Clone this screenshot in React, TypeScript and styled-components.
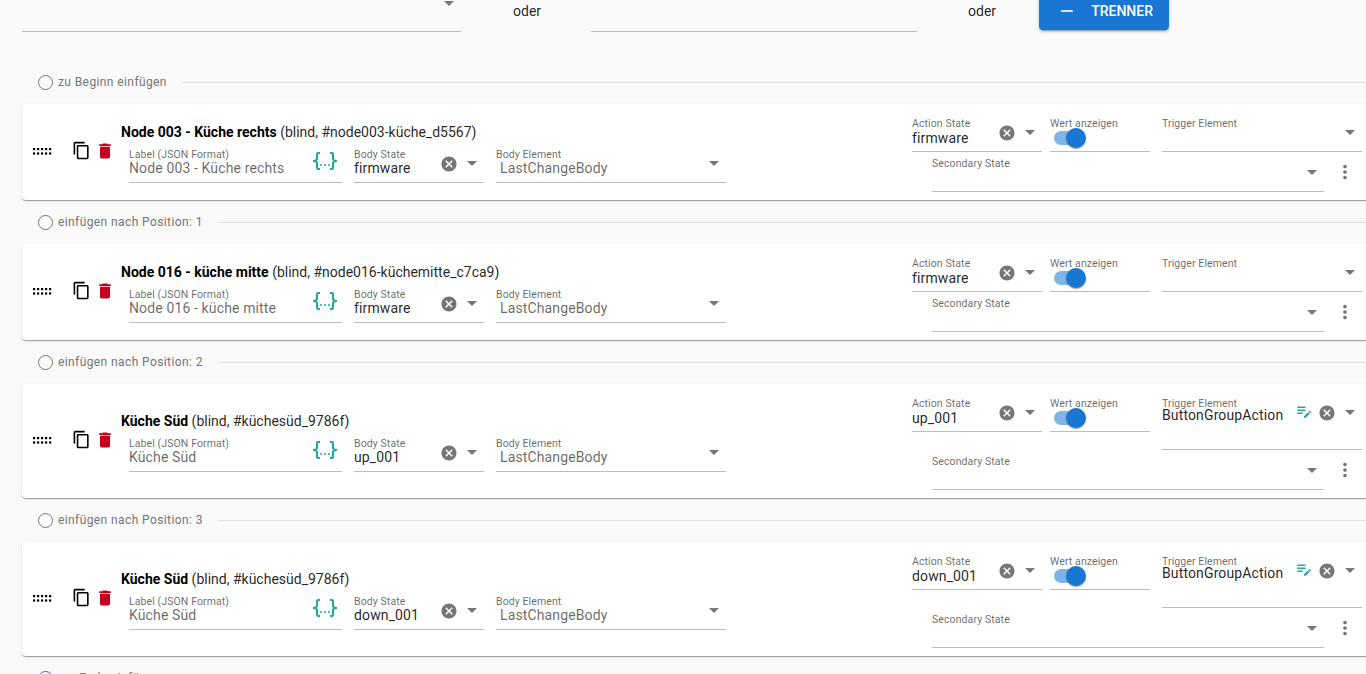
import React, { FC } from 'react';
import styled, { createGlobalStyle } from 'styled-components';

const PATHS = {
  arrow: 'M7 10l5 5 5-5z',
  cancel: 'M12 2C6.47 2 2 6.47 2 12s4.47 10 10 10 10-4.47 10-10S17.53 2 12 2zm5 13.59L15.59 17 12 13.41 8.41 17 7 15.59 10.59 12 7 8.41 8.41 7 12 10.59 15.59 7 17 8.41 13.41 12 17 15.59z',
  copy: 'M16 1H4c-1.1 0-2 .9-2 2v14h2V3h12V1zm3 4H8c-1.1 0-2 .9-2 2v14c0 1.1.9 2 2 2h11c1.1 0 2-.9 2-2V7c0-1.1-.9-2-2-2zm0 16H8V7h11v14z',
  trash: 'M6 19c0 1.1.9 2 2 2h8c1.1 0 2-.9 2-2V7H6v12zM19 4h-3.5l-1-1h-5l-1 1H5v2h14V4z',
  more: 'M12 8c1.1 0 2-.9 2-2s-.9-2-2-2-2 .9-2 2 .9 2 2 2zm0 2c-1.1 0-2 .9-2 2s.9 2 2 2 2-.9 2-2-.9-2-2-2zm0 6c-1.1 0-2 .9-2 2s.9 2 2 2 2-.9 2-2-.9-2-2-2z',
  minus: 'M19 13H5v-2h14v2z',
  json: 'M5,3H7V5H5V10A2,2 0 0,1 3,12A2,2 0 0,1 5,14V19H7V21H5C3.93,20.73 3,20.1 3,19V15A2,2 0 0,0 1,13H0V11H1A2,2 0 0,0 3,9V5A2,2 0 0,1 5,3M19,3A2,2 0 0,1 21,5V9A2,2 0 0,0 23,11H24V13H23A2,2 0 0,0 21,15V19A2,2 0 0,1 19,21H17V19H19V14A2,2 0 0,1 21,12A2,2 0 0,1 19,10V5H17V3H19M12,15A1,1 0 0,1 13,16A1,1 0 0,1 12,17A1,1 0 0,1 11,16A1,1 0 0,1 12,15M8,15A1,1 0 0,1 9,16A1,1 0 0,1 8,17A1,1 0 0,1 7,16A1,1 0 0,1 8,15M16,15A1,1 0 0,1 17,16A1,1 0 0,1 16,17A1,1 0 0,1 15,16A1,1 0 0,1 16,15Z',
  editNote: 'M3 10h11v2H3v-2zm0-2h11V6H3v2zm0 8h7v-2H3v2zm15.01-3.13.71-.71c.39-.39 1.02-.39 1.41 0l.71.71c.39.39.39 1.02 0 1.41l-.71.71-2.12-2.12zm-.71.71-5.3 5.3V21h2.12l5.3-5.3-2.12-2.12z',
};

const GlobalStyle = createGlobalStyle`
  html, body {
    margin: 0;
    height: 674px;
    overflow: hidden;
    background: #fafafa;
    font-family: Roboto, "Liberation Sans", sans-serif;
  }
`;

const Icon: FC<{ d: string; size?: number; color?: string }> = ({ d, size = 24, color = '#757575' }) => (
  <svg width={size} height={size} viewBox="0 0 24 24" fill={color} style={{ flexShrink: 0, display: 'block' }}>
    <path d={d} />
  </svg>
);

const Page = styled.div`
  width: 1386px;
  padding-left: 22px;
  box-sizing: border-box;
`;

const Toolbar = styled.div`
  display: flex;
  align-items: flex-end;
  height: 32px;
  margin-bottom: 28px;
`;

const ToolbarField = styled.div<{ $width: number }>`
  display: flex;
  justify-content: flex-end;
  align-items: flex-start;
  width: ${(p) => p.$width}px;
  height: 32px;
  box-sizing: border-box;
  border-bottom: 1px solid #bdbdbd;
`;

const ToolbarArrow = styled.div`
  margin-top: -9px;
`;

const OrText = styled.span<{ $left: number; $right: number }>`
  align-self: flex-start;
  margin: 3px ${(p) => p.$right}px 0 ${(p) => p.$left}px;
  font-size: 14px;
  line-height: 16px;
  color: rgba(0, 0, 0, 0.87);
`;

const SeparatorButton = styled.button`
  display: flex;
  align-items: center;
  align-self: flex-start;
  width: 130px;
  height: 38px;
  margin-top: -8px;
  padding: 0 0 0 18px;
  border: 0;
  border-radius: 4px;
  background: #1976d2;
  color: #fff;
  font-family: inherit;
  font-size: 14px;
  font-weight: 500;
  text-transform: uppercase;
  box-shadow: 0 3px 1px -2px rgba(0, 0, 0, 0.2), 0 2px 2px 0 rgba(0, 0, 0, 0.14), 0 1px 5px 0 rgba(0, 0, 0, 0.12);
  span {
    margin-left: 14px;
  }
`;

const InsertRow = styled.div`
  display: flex;
  align-items: center;
  height: 44px;
  padding-left: 16px;
`;

const Radio = styled.span<{ $checked?: boolean }>`
  display: flex;
  align-items: center;
  justify-content: center;
  width: 15px;
  height: 15px;
  margin-top: 1px;
  box-sizing: border-box;
  border: 1.5px solid ${(p) => (p.$checked ? '#1976d2' : '#757575')};
  border-radius: 50%;
  &::after {
    content: '';
    display: ${(p) => (p.$checked ? 'block' : 'none')};
    width: 7px;
    height: 7px;
    border-radius: 50%;
    background: #1976d2;
  }
`;

const InsertLabel = styled.span`
  margin-left: 5px;
  font-size: 12px;
  letter-spacing: 0.4px;
  color: #757575;
  white-space: nowrap;
`;

const InsertLine = styled.span`
  flex: 1;
  margin-left: 16px;
  border-top: 1px solid #e0e0e0;
`;

const Card = styled.div<{ $tall?: boolean }>`
  display: flex;
  align-items: center;
  height: ${(p) => (p.$tall ? 114 : 96)}px;
  padding: 0 24px 0 11px;
  box-sizing: border-box;
  border-radius: 4px;
  background: #fff;
  box-shadow: 0 2px 1px -1px rgba(0, 0, 0, 0.2), 0 1px 1px 0 rgba(0, 0, 0, 0.14), 0 1px 3px 0 rgba(0, 0, 0, 0.12);
`;

const DragHandle = styled.svg`
  flex-shrink: 0;
  width: 20px;
  height: 7px;
  margin-top: -2px;
`;

const CopyButton = styled.div`
  margin-left: 18.5px;
  margin-top: -3px;
`;

const DeleteButton = styled.div`
  margin-left: 4.5px;
  margin-top: -2px;
`;

const Main = styled.div`
  margin: 1px 0 0 6px;
`;

const Title = styled.div`
  height: 20px;
  font-size: 14px;
  line-height: 20px;
  color: rgba(0, 0, 0, 0.87);
  white-space: nowrap;
  b {
    font-weight: 700;
    color: #000;
  }
`;

const FieldRow = styled.div`
  display: flex;
  gap: 12px;
  margin-left: 8px;
`;

const Field = styled.div<{ $width?: number; $height?: number; $gap?: number; $grow?: boolean }>`
  position: relative;
  width: ${(p) => (p.$grow ? 'auto' : `${p.$width}px`)};
  flex: ${(p) => (p.$grow ? 1 : '0 0 auto')};
  height: ${(p) => p.$height ?? 40}px;
  margin-left: ${(p) => p.$gap ?? 0}px;
  padding-top: 6px;
  box-sizing: border-box;
  border-bottom: 1px solid #bdbdbd;
`;

const BodyField = styled(Field)`
  height: 41px;
  padding-top: 7px;
`;

const FieldLabel = styled.div`
  font-size: 10.5px;
  line-height: 12px;
  letter-spacing: 0.1px;
  color: rgba(0, 0, 0, 0.6);
  white-space: nowrap;
`;

const FieldValue = styled.div<{ $muted?: boolean; $indent?: number; $lift?: number }>`
  margin-top: ${(p) => -(p.$lift ?? 0)}px;
  padding-left: ${(p) => p.$indent ?? 0}px;
  font-size: 14px;
  line-height: 16px;
  letter-spacing: 0.13px;
  color: ${(p) => (p.$muted ? 'rgba(0, 0, 0, 0.6)' : 'rgba(0, 0, 0, 0.87)')};
  white-space: nowrap;
`;

const Adornments = styled.div<{ $top?: number }>`
  position: absolute;
  top: ${(p) => p.$top ?? 8}px;
  right: 0;
  display: flex;
  align-items: center;
`;

const ClearIcon = styled.div`
  margin: 2px 2px 0 0;
`;

const EditIcon = styled.div`
  margin: -2px 5px 0 0;
`;

const JsonIcon = styled.div`
  position: absolute;
  top: 7px;
  right: 5px;
`;

const Side = styled.div`
  display: flex;
  flex-direction: column;
  flex-shrink: 0;
  align-self: flex-start;
  width: 450px;
  margin-top: 8px;
  margin-left: auto;
`;

const SideRow = styled.div<{ $indent?: number; $endGap?: number }>`
  display: flex;
  align-items: flex-start;
  margin-left: ${(p) => p.$indent ?? 0}px;
  padding-right: ${(p) => p.$endGap ?? 0}px;
`;

const Switch = styled.div`
  position: relative;
  width: 30px;
  height: 14px;
  margin: 1px 0 0 4px;
  border-radius: 7px;
  background: rgba(25, 118, 210, 0.55);
`;

const SwitchThumb = styled.span`
  position: absolute;
  top: -3px;
  right: -2px;
  width: 20px;
  height: 20px;
  border-radius: 50%;
  background: #1976d2;
  box-shadow: 0 2px 1px -1px rgba(0, 0, 0, 0.2), 0 1px 1px 0 rgba(0, 0, 0, 0.14), 0 1px 3px 0 rgba(0, 0, 0, 0.12);
`;

const MoreButton = styled.div`
  margin: 9px 0 0 10px;
`;

interface Row {
  name: string;
  detail: string;
  state: string;
  trigger?: boolean;
}

const rows: Row[] = [
  { name: 'Node 003 - Küche rechts', detail: '(blind, #node003-küche_d5567)', state: 'firmware' },
  { name: 'Node 016 - küche mitte', detail: '(blind, #node016-küchemitte_c7ca9)', state: 'firmware' },
  { name: 'Küche Süd', detail: '(blind, #küchesüd_9786f)', state: 'up_001', trigger: true },
  { name: 'Küche Süd', detail: '(blind, #küchesüd_9786f)', state: 'down_001', trigger: true },
];

const insertLabels = ['einfügen nach Position: 1', 'einfügen nach Position: 2', 'einfügen nach Position: 3'];

const Insert: FC<{ label: string; checked?: boolean }> = ({ label, checked }) => (
  <InsertRow>
    <Radio $checked={checked} />
    <InsertLabel>{label}</InsertLabel>
    <InsertLine />
  </InsertRow>
);

const Clearable: FC<{ top?: number }> = ({ top }) => (
  <Adornments $top={top}>
    <ClearIcon><Icon d={PATHS.cancel} size={18} /></ClearIcon>
    <Icon d={PATHS.arrow} />
  </Adornments>
);

const ItemCard: FC<{ row: Row }> = ({ row }) => (
  <Card $tall={row.trigger}>
    <DragHandle viewBox="0 0 20 7" fill="#000">
      {[0, 4, 8, 12, 16].map((x) => (
        <g key={x}>
          <rect x={x} y="0" width="2.2" height="2.2" />
          <rect x={x} y="4.4" width="2.2" height="2.2" />
        </g>
      ))}
    </DragHandle>
    <CopyButton><Icon d={PATHS.copy} size={19} color="#000" /></CopyButton>
    <DeleteButton><Icon d={PATHS.trash} size={20} color="#c4001d" /></DeleteButton>
    <Main>
      <Title><b>{row.name}</b> {row.detail}</Title>
      <FieldRow>
        <BodyField $width={213}>
          <FieldLabel>Label (JSON Format)</FieldLabel>
          <FieldValue $muted $lift={1}>{row.name}</FieldValue>
          <JsonIcon><Icon d={PATHS.json} color="#26a69a" /></JsonIcon>
        </BodyField>
        <BodyField $width={130}>
          <FieldLabel>Body State</FieldLabel>
          <FieldValue $lift={1}>{row.state}</FieldValue>
          <Clearable top={9} />
        </BodyField>
        <BodyField $width={230}>
          <FieldLabel>Body Element</FieldLabel>
          <FieldValue $muted $indent={4} $lift={1}>LastChangeBody</FieldValue>
          <Adornments $top={9}><Icon d={PATHS.arrow} /></Adornments>
        </BodyField>
      </FieldRow>
    </Main>
    <Side>
      <SideRow>
        <Field $width={130}>
          <FieldLabel>Action State</FieldLabel>
          <FieldValue>{row.state}</FieldValue>
          <Clearable />
        </Field>
        <Field $width={100} $gap={8}>
          <FieldLabel>Wert anzeigen</FieldLabel>
          <Switch><SwitchThumb /></Switch>
        </Field>
        <Field $width={200} $gap={12} $height={row.trigger ? 58 : 40}>
          <FieldLabel>Trigger Element</FieldLabel>
          {row.trigger && <FieldValue $lift={3}>ButtonGroupAction</FieldValue>}
          {row.trigger ? (
            <Adornments>
              <EditIcon><Icon d={PATHS.editNote} size={18} color="#26a69a" /></EditIcon>
              <ClearIcon><Icon d={PATHS.cancel} size={18} /></ClearIcon>
              <Icon d={PATHS.arrow} />
            </Adornments>
          ) : (
            <Adornments><Icon d={PATHS.arrow} /></Adornments>
          )}
        </Field>
      </SideRow>
      <SideRow $indent={20} $endGap={6}>
        <Field $grow>
          <FieldLabel>Secondary State</FieldLabel>
          <Adornments><Icon d={PATHS.arrow} /></Adornments>
        </Field>
        <MoreButton><Icon d={PATHS.more} size={22} /></MoreButton>
      </SideRow>
    </Side>
  </Card>
);

const App: FC = () => (
  <Page>
    <GlobalStyle />
    <Toolbar>
      <ToolbarField $width={439}>
        <ToolbarArrow><Icon d={PATHS.arrow} /></ToolbarArrow>
      </ToolbarField>
      <OrText $left={52} $right={50}>oder</OrText>
      <ToolbarField $width={326} />
      <OrText $left={51} $right={43}>oder</OrText>
      <SeparatorButton>
        <Icon d={PATHS.minus} size={20} color="#fff" />
        <span>Trenner</span>
      </SeparatorButton>
    </Toolbar>
    <Insert label="zu Beginn einfügen" />
    {rows.map((row, i) => (
      <React.Fragment key={i}>
        <ItemCard row={row} />
        {i < insertLabels.length
          ? <Insert label={insertLabels[i]} />
          : <Insert label="am Ende einfügen" checked />}
      </React.Fragment>
    ))}
  </Page>
);

export default App;
